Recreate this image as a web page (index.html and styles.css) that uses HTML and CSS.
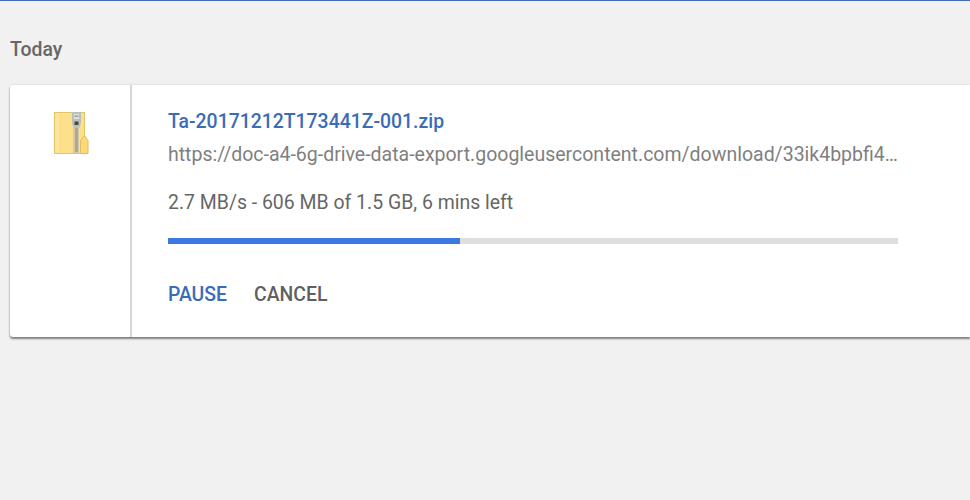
FILE: index.html
```html
<!DOCTYPE html>
<html lang="en">
<head>
<meta charset="utf-8">
<title>Downloads</title>
<link rel="stylesheet" href="styles.css">
</head>
<body>
<main class="page">
  <h2 class="day">Today</h2>
  <section class="card">
    <div class="icon-col">
      <svg class="zip" width="36" height="44" viewBox="0 0 36 44">
        <rect x="0.5" y="0.5" width="30" height="41" fill="#fde08a" stroke="#e3c569"/>
        <rect x="1.5" y="1.5" width="4" height="39" fill="#fbe59c"/>
        <rect x="5.5" y="1.5" width="2" height="39" fill="#fddc84"/>
        <path d="M26.5 41.5V28.500l4-5 3.500 5v13z" fill="#fdd874" stroke="#dcbd63"/>
        <rect x="19" y="15" width="6" height="26" fill="#d2c9a8"/>
        <path d="M21 17h3M21 19h3M21 21h3M21 23h3M21 25h3M21 27h3M21 29h3M21 31h3M21 33h3M21 35h3M21 37h3M21 39h3" stroke="#85816f" stroke-width="0.900"/>
        <path d="M18 0h9v11l-1.500 4.500h-6l-1.500-4.500z" fill="#bcbfba"/>
        <rect x="20" y="2" width="5" height="5" fill="#dfe1de"/>
        <rect x="20.500" y="3.500" width="4" height="1.500" fill="#9a9d98"/>
        <rect x="20.500" y="9.500" width="4" height="3.500" fill="#45483f"/>
      </svg>
    </div>
    <div class="details">
      <a class="name">Ta-20171212T173441Z-001.zip</a>
      <div class="url">https://doc-a4-6g-drive-data-export.googleusercontent.com/download/33ik4bpbfi4…</div>
      <div class="status">2.7 MB/s - 606 MB of 1.5 GB, 6 mins left</div>
      <div class="track"><div class="fill"></div></div>
      <div class="actions">
        <a class="btn primary">PAUSE</a>
        <a class="btn">CANCEL</a>
      </div>
    </div>
  </section>
</main>
</body>
</html>
```

FILE: styles.css
```css
html, body { margin: 0; padding: 0; }
body {
  width: 970px;
  height: 500px;
  overflow: hidden;
  background: #f1f1f1;
  font-family: Roboto, "Liberation Sans", sans-serif;
  border-top: 1px solid #3f6cb4;
  box-sizing: border-box;
}
.page { padding: 38px 0 0 10px; }
.day {
  margin: 0 0 25px;
  font-size: 19.400px;
  line-height: 21px;
  font-weight: 500;
  color: #666;
}
.card {
  display: flex;
  height: 252px;
  background: #fff;
  border-radius: 3px 0 0 3px;
  box-shadow: 0 2px 2px rgba(0,0,0,.45), 0 0 3px rgba(0,0,0,.12);
}
.icon-col {
  flex: none;
  width: 76px;
  border-right: 2px solid #d6d6d6;
  padding: 27px 0 0 44px;
}
.zip { display: block; }
.details {
  padding: 26px 0 0 36px;
  width: 730px;
}
.name {
  display: block;
  font-size: 19.400px;
  line-height: 22px;
  font-weight: 500;
  color: #3b6cb8;
}
.url {
  margin-top: 11px;
  font-size: 19.500px;
  line-height: 22px;
  color: #7f7f7f;
  white-space: nowrap;
}
.status {
  margin-top: 26px;
  font-size: 19.450px;
  line-height: 22px;
  color: #666;
}
.track {
  margin-top: 24px;
  height: 6px;
  background: #dedede;
}
.fill { width: 40%; height: 100%; background: #3b78e0; }
.actions {
  display: flex;
  gap: 27px;
  margin-top: 40px;
}
.btn {
  font-size: 19.400px;
  line-height: 22px;
  font-weight: 500;
  color: #5f5f5f;
}
.btn.primary { color: #3b6cb8; }
```
